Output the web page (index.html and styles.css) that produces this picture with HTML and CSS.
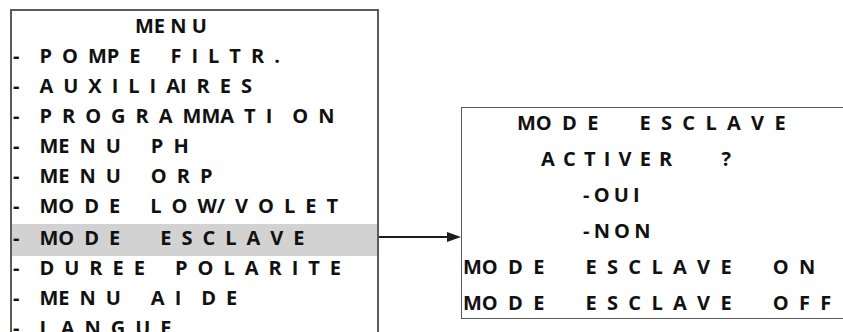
FILE: index.html
```html
<!DOCTYPE html>
<html lang="fr">
<head>
    <meta charset="UTF-8">
    <meta name="viewport" content="width=device-width, initial-scale=1.0">
    <title>Menu - Mode esclave</title>
    <link rel="stylesheet" href="styles.css">
</head>
<body>
    <div class="schema">
        <!-- Ecran du menu principal -->
        <div class="ecran menu">
            <div class="ligne titre">ME N U</div>
            <div class="ligne">-  P O MP E   F I L T R .</div>
            <div class="ligne">-  A U X I L I AI R E S</div>
            <div class="ligne">-  P R O G R A MMA T I  O N</div>
            <div class="ligne">-  ME N U   P H</div>
            <div class="ligne">-  ME N U   O R P</div>
            <div class="ligne">-  MO D E   L O W/ V O L E T</div>
            <div class="ligne actif">-  MO D E    E S C L A V E</div>
            <div class="ligne">-  D U R E E   P O L A R I T E</div>
            <div class="ligne">-  ME N U   A I  D E</div>
            <div class="ligne">-  L A N G U E</div>
        </div>

        <!-- Fleche vers le sous-menu -->
        <svg class="fleche" width="82" height="12" viewBox="0 0 82 12">
            <line x1="0" y1="6" x2="70" y2="6" stroke="#1c1c1c" stroke-width="2"/>
            <polygon points="68,1 82,6 68,11" fill="#1c1c1c"/>
        </svg>

        <!-- Ecran du mode esclave -->
        <div class="ecran esclave">
            <div class="ligne retrait-1">MO D E    E S C L A V E</div>
            <div class="ligne retrait-2 moyen">A C T I V E R      ?</div>
            <div class="ligne retrait-3 serre">- O U I</div>
            <div class="ligne retrait-3 serre">- N O N</div>
            <div class="ligne">MO D E    E S C L A V E    O N</div>
            <div class="ligne">MO D E    E S C L A V E    O F F</div>
        </div>
    </div>
</body>
</html>
```

FILE: styles.css
```css
body {
    margin: 0;
    background-color: white;
    font-family: "Open Sans", Lato, sans-serif;
    color: #111;
    overflow: hidden;
    height: 332px;
}

.schema {
    display: flex;
    align-items: flex-start;
    width: 900px;
}

.ecran {
    border: 1px solid #5a5a5a;
    box-sizing: border-box;
}

.ligne {
    font-size: 20px;
    font-weight: bold;
    line-height: 30px;
    height: 30px;
    white-space: pre;
    word-spacing: 4.8px;
}

/* Menu principal */
.menu {
    margin-left: 10px;
    margin-top: 9px;
    width: 369px;
    height: 340px;
    border-width: 2px 2px 0 2px;
    padding-left: 1px;
}

.menu .titre {
    padding-left: 122px;
    word-spacing: 0;
}

.menu .actif {
    background-color: #d2d2d2;
    margin: 3px 0 -3px -1px;
    padding-left: 1px;
    height: 32px;
    line-height: 28px;
}

.fleche {
    display: block;
    margin-top: 231px;
    flex-shrink: 0;
}

/* Sous-menu mode esclave */
.esclave {
    margin-top: 107px;
    width: 420px;
    height: 212px;
    display: flex;
    flex-direction: column;
    justify-content: space-between;
    padding-left: 1px;
}

.esclave .ligne {
    word-spacing: 5.1px;
}

.esclave .moyen {
    word-spacing: 3px;
}

.esclave .serre {
    word-spacing: -1px;
}

.retrait-1 {
    padding-left: 54px;
}

.retrait-2 {
    padding-left: 78px;
}

.retrait-3 {
    padding-left: 120px;
}
```
